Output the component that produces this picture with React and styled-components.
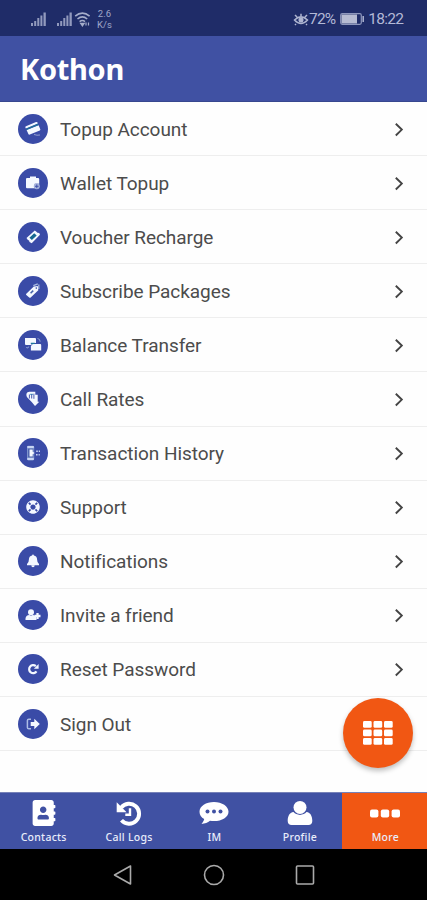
import { createGlobalStyle, styled } from 'styled-components'
import { FaAddressBook, FaLifeRing } from 'react-icons/fa'

const colors = {
  status: '#1f2c68',
  primary: '#4051a3',
  badge: '#3a4ba7',
  accent: '#f15713',
  text: '#4c4c4c',
  line: '#eeeeee',
  statusText: '#b3b9d6'
}

const GlobalStyle = createGlobalStyle`
  * {
    box-sizing: border-box;
  }

  body {
    margin: 0;
    background: #fff;
  }

  svg {
    display: block;
    flex: none;
  }
`

const Screen = styled.div`
  position: relative;
  display: flex;
  flex-direction: column;
  width: 427px;
  height: 900px;
  overflow: hidden;
  background: #fefefe;
  font-family: Roboto, sans-serif;
`

const StatusBar = styled.div`
  display: flex;
  justify-content: space-between;
  align-items: center;
  height: 36px;
  padding: 2px 23px 0 30px;
  background: ${colors.status};
  color: ${colors.statusText};
`

const StatusGroup = styled.div`
  display: flex;
  align-items: center;
`

const Signals = styled.div`
  display: flex;
  gap: 9px;
  margin-right: 1px;
`

const Speed = styled.div`
  margin-left: 6px;
  color: #9fa7c8;
  font-size: 9.5px;
  line-height: 11px;
  text-align: center;
`

const StatusText = styled.span`
  width: ${props => props.$width}px;
  font-size: 15.5px;
  line-height: 18px;
  white-space: nowrap;
  letter-spacing: ${props => props.$spacing || 0}px;
`

const Header = styled.header`
  display: flex;
  align-items: center;
  height: 66px;
  padding: 1px 20px 0;
  border-bottom: 1px solid #37488f;
  background: ${colors.primary};
`

const Title = styled.h1`
  margin: 0;
  color: #fff;
  font: 700 29px/40px 'Noto Sans', sans-serif;
  letter-spacing: -0.3px;
`

const Menu = styled.ul`
  flex: 1;
  margin: 0;
  padding: 0;
  list-style: none;
`

const Row = styled.li`
  display: flex;
  align-items: center;
  height: 54.1px;
  padding: 0 22px 0 18px;
  border-bottom: 1px solid ${colors.line};
`

const Badge = styled.span`
  display: flex;
  align-items: center;
  justify-content: center;
  width: 30px;
  height: 30px;
  border-radius: 50%;
  background: ${colors.badge};
  color: #f4f8ff;
`

const Label = styled.span`
  flex: 1;
  margin-left: 12px;
  padding-top: 2px;
  color: ${colors.text};
  font-size: 19px;
  line-height: 26px;
  letter-spacing: -0.05px;
`

const Fab = styled.button`
  position: absolute;
  top: 698px;
  right: 14px;
  display: flex;
  align-items: center;
  justify-content: center;
  width: 70px;
  height: 70px;
  padding: 0;
  border: 0;
  border-radius: 50%;
  background: ${colors.accent};
  box-shadow: 0 3px 5px rgba(0, 0, 0, 0.25);
`

const Tabs = styled.nav`
  display: grid;
  grid-template-columns: repeat(5, 1fr);
  height: 57px;
  border-top: 1px solid #7681b8;
  background: ${colors.primary};
`

const Tab = styled.div`
  display: flex;
  flex-direction: column;
  align-items: center;
  padding-top: 6px;
  padding-left: 2px;
  background: ${props => (props.$active ? colors.accent : 'transparent')};
  color: #fff;
`

const TabIcon = styled.span`
  display: flex;
  align-items: center;
  justify-content: center;
  height: 28px;
`

const TabLabel = styled.span`
  margin-top: 3px;
  color: #e9edfb;
  font: 500 10.5px/14px 'Noto Sans', sans-serif;
  letter-spacing: 0.25px;
`

const SystemBar = styled.div`
  display: flex;
  align-items: center;
  justify-content: center;
  gap: 69px;
  height: 51px;
  background: #000;
`

const Glyph = ({ children }) => (
  <svg width='30' height='30' viewBox='0 0 30 30' fill='currentColor'>{children}</svg>
)

const CardIcon = () => (
  <Glyph>
    <path d='M8 12.2 18 8.1q1-.4 1.4.5l.4 1L7.9 14.5l-.5-1.1q-.3-.8.6-1.2Z' />
    <path d='m8.6 16.1 12-4.9 1.7 4q.3.9-.5 1.3l-10 4.1q-1 .4-1.4-.5Z' />
    <path d='m8 14.7 12-4.9.5 1.2-12 4.9Z' fill='#1d719b' />
    <path d='M16 20.5q3 1.2 6 .5' fill='none' stroke='currentColor' strokeWidth='.8' opacity='.6' />
  </Glyph>
)

const WalletIcon = () => (
  <Glyph>
    <path d='M9 10h3V8.5h6V10h2q1.2 0 1.2 1.2v4.5h-4.5v4.5H9q-1 0-1-1v-8q0-1.2 1-1.2Z' />
    <circle cx='18.8' cy='18.3' r='3' fill='#a4b2dd' />
    <path d='M18.8 16.4v3.8M17 18.3h3.6' stroke={colors.badge} strokeWidth='.9' />
  </Glyph>
)

const VoucherIcon = () => (
  <Glyph>
    <path d='m8.5 16 8.3-7.6 1.6 1.4q.7 1.1 2.8 1.3l.8 1.7-8.3 8.4-2.2-1.2q0-1.9-1.6-2Z' />
    <path d='m11.4 15.8 4.8-4.6 2.5 2.2-4.8 4.7Z' fill='#166791' />
  </Glyph>
)

const TagIcon = () => (
  <Glyph>
    <path d='m8.3 17.8 7.5-7.3 4-.5.5 4.2-7.6 7.2q-.8.7-1.5 0l-2.9-2.5q-.7-.5 0-1.1Z' />
    <path d='m15.3 9.7 4.5-1.9m1 5.2v-4.6' fill='none' stroke='#a7b8df' strokeWidth='1.3' />
    <path d='m12.6 17.2 2.6-2.6' stroke='#4864ac' strokeWidth='1.6' />
    <circle cx='18.3' cy='12.1' r='.8' fill={colors.badge} />
  </Glyph>
)

const TransferIcon = () => (
  <Glyph>
    <path d='M7 8h10q1 0 1 1v4h-3l-2 2H8q-1 0-1-1Z' />
    <path d='M14.7 14h7.5q1 0 1 1v5.5H12.9v-4.6Z' />
    <path d='M12.8 13.4h4' stroke='#19759b' strokeWidth='1.3' />
    <path d='M19.5 8.5q2.6.2 2.7 3.2M10.7 16.5q-.2 2.5-2.5 1' stroke='#8d9fd3' fill='none' />
  </Glyph>
)

const RatesIcon = () => (
  <Glyph>
    <path d='M11.3 7.8h6v3h2.4v7h1.6L17 22l-3.1-3.8-5-5.1q-1.9-4.6 2.4-5.3Z' />
    <path d='M11.4 10.5v4M13.7 10v4.5m2.2-4.8v5.1' stroke={colors.badge} strokeWidth='.9' />
    <path d='M12 10.3h3' stroke='#2d7fae' strokeWidth='.8' />
  </Glyph>
)

const HistoryIcon = () => (
  <Glyph>
    <rect x='9' y='7.8' width='7.2' height='14.6' rx='1.4' fill='#7f95cc' />
    <path d='M9.3 9h6.5M9.3 21h6.5' stroke='#e1eaff' strokeWidth='1.5' />
    <path d='M10.2 10.8h5v8.4h-5z' fill='#445ba9' />
    <path d='M11.5 11.5h3.2v2.2l2 1.3-2 1.3v2.2h-3.2Z' />
    <path d='M18.2 13.2h1.6m1 0h1.2M18 16.8h1.6m1 0h1.2' stroke='#c4d1f3' strokeWidth='1.4' />
  </Glyph>
)

const BellIcon = () => (
  <Glyph>
    <path d='M15 8.6q.9 0 .9 1 3.1.7 3.2 4 0 3.4 1.9 4.4v1.3H9V18q1.9-1 1.9-4.4.1-3.3 3.2-4 0-1 .9-1Z' />
    <path d='M13.3 19.3h3.4q0 1.9-1.7 1.9t-1.7-1.9Z' />
  </Glyph>
)

const InviteIcon = () => (
  <Glyph>
    <circle cx='13' cy='12.2' r='3' />
    <path d='M7.5 20v-1.4q.2-3.3 4-3.6 1.5 1 3.1 0 3.7.3 3.9 3.7V20Z' />
    <path d='M19.5 13v6m-3-3h6' stroke='currentColor' strokeWidth='2.3' />
  </Glyph>
)

const ResetIcon = () => (
  <Glyph>
    <path d='M18.5 17.4a4 4 0 1 1-.7-5.2' fill='none' stroke='currentColor' strokeWidth='2.2' />
    <path d='M20.6 10v4.7h-4.7Z' />
  </Glyph>
)

const SignOutIcon = () => (
  <Glyph>
    <path d='M13 10.2h-2.2q-1.4 0-1.4 1.4v6.8q0 1.4 1.4 1.4H13' fill='none' stroke='#aebde6' strokeWidth='1.5' />
    <path d='M12.7 12.9h3.6V9.7l5.5 5.3-5.5 5.3v-3.2h-3.6Z' />
  </Glyph>
)

const Chevron = () => (
  <svg width='12' height='16' viewBox='0 0 12 16'>
    <path d='m2.8 2.7 6 5.9-6 5.9' fill='none' stroke='#444' strokeWidth='1.9' />
  </svg>
)

const Signal = () => (
  <svg width='17' height='16' viewBox='0 0 17 16' fill='#929abd'>
    <path d='M1 12h2v3H1zM4.2 10h2v5h-2zM7.3 7h2v8h-2zM10.4 4.5h2V15h-2zM13.5 1.5h2.3V15h-2.3z' />
  </svg>
)

const Wifi = () => (
  <svg width='17' height='16' viewBox='0 0 17 16' fill='none' stroke='#a5adca' strokeWidth='1.6'>
    <path d='M1.2 5.2q7.2-6.2 14.4 0M3.5 8q4.9-4.1 9.7 0M5.6 10.6q2.8-2.2 5.4 0' />
    <path d='m7 12.5 1.4 2 1.4-2Z' fill='#a5adca' />
    <path d='M12 11.5v3m2.5-3v3' strokeWidth='1.2' />
  </svg>
)

const Eye = () => (
  <svg width='16' height='14' viewBox='0 0 16 14' fill='none' stroke='#aeb5d1' strokeWidth='1.5'>
    <path d='M1.5 8Q8 1.7 14.5 8 8 15 1.5 8ZM2 3l2 2m4-3.2V4m6-1-2 2M3 12l-1 1m11-1 1 1' />
    <circle cx='8' cy='8' r='1.8' fill='#aeb5d1' />
  </svg>
)

const Battery = () => (
  <svg width='25' height='12' viewBox='0 0 25 12'>
    <rect x='.7' y='.7' width='20.6' height='10.6' rx='1.5' fill='none' stroke='#8e97bd' strokeWidth='1.2' />
    <rect x='1.5' y='1.5' width='15.5' height='9' fill='#b6bbd2' />
    <path d='M23.2 3v6' stroke='#aeb5d1' strokeWidth='1.5' />
  </svg>
)

const Recent = () => (
  <svg width='26' height='25' viewBox='0 0 26 25' fill='none' stroke='#fff'>
    <path d='M5.2 6.6a10 10 0 1 1 .3 12.6' strokeWidth='3.9' />
    <path d='M.7 1.3v9.9h9.9Z' fill='#fff' stroke='none' />
    <path d='M14 7.2v6.6H9.3' strokeWidth='2.4' />
  </svg>
)

const Bubble = () => (
  <svg width='30' height='26' viewBox='0 0 30 26'>
    <path d='M15 2C7 2 .5 6.1.5 11.7c0 3 1.8 5.7 4.7 7.4-.3 1.9-1.4 3.4-2.7 4.8 3.4-.2 6.3-1.4 8.5-3.2 1.3.3 2.6.4 4 .4 8 0 14.5-4 14.5-9.4S23 2 15 2Z' fill='#fff' />
    {[8.5, 15, 21.5].map(x => <circle key={x} cx={x} cy='11.5' r='2' fill={colors.primary} />)}
  </svg>
)

const Person = () => (
  <svg width='26' height='26' viewBox='0 0 26 26' fill='#fff'>
    <path d='M6.5 12.1c1.5 1.8 3.8 2.8 6.5 2.8s5-1 6.5-2.8c4 .5 5.8 4.2 5.8 8.8 0 2.4-1.6 4.1-3.8 4.1h-17C2.3 25 .7 23.3.7 20.9c0-4.6 1.8-8.3 5.8-8.8Z' />
    <circle cx='13' cy='7.4' r='6.5' />
  </svg>
)

const Dots = () => (
  <svg width='30' height='9' viewBox='0 0 30 9' fill='#fff'>
    {[0, 10.8, 21.6].map(x => <rect key={x} x={x} y='.5' width='8.4' height='8' rx='2' />)}
  </svg>
)

const Keypad = () => (
  <svg width='30' height='24' viewBox='0 0 30 24' fill='#fff'>
    {[0, 8.5, 17].map(y => [0, 10.5, 21].map(x => (
      <rect key={`${x}-${y}`} x={x} y={y} width='8.7' height='6.8' rx='1.4' />
    )))}
  </svg>
)

const items = [
  { label: 'Topup Account', icon: <CardIcon /> },
  { label: 'Wallet Topup', icon: <WalletIcon /> },
  { label: 'Voucher Recharge', icon: <VoucherIcon /> },
  { label: 'Subscribe Packages', icon: <TagIcon /> },
  { label: 'Balance Transfer', icon: <TransferIcon /> },
  { label: 'Call Rates', icon: <RatesIcon /> },
  { label: 'Transaction History', icon: <HistoryIcon /> },
  { label: 'Support', icon: <FaLifeRing size={14} /> },
  { label: 'Notifications', icon: <BellIcon /> },
  { label: 'Invite a friend', icon: <InviteIcon /> },
  { label: 'Reset Password', icon: <ResetIcon /> },
  { label: 'Sign Out', icon: <SignOutIcon />, last: true }
]

const tabs = [
  { label: 'Contacts', icon: <FaAddressBook size={26} /> },
  { label: 'Call Logs', icon: <Recent /> },
  { label: 'IM', icon: <Bubble /> },
  { label: 'Profile', icon: <Person /> },
  { label: 'More', icon: <Dots />, active: true }
]

const App = () => (
  <Screen>
    <GlobalStyle />
    <StatusBar>
      <StatusGroup>
        <Signals>
          <Signal />
          <Signal />
        </Signals>
        <Wifi />
        <Speed>2.6<br />K/s</Speed>
      </StatusGroup>
      <StatusGroup>
        <Eye />
        <StatusText $width={31} $spacing={-0.8}>72%</StatusText>
        <Battery />
        <StatusText $width={39} $spacing={-0.7}>&nbsp;18:22</StatusText>
      </StatusGroup>
    </StatusBar>
    <Header>
      <Title>Kothon</Title>
    </Header>
    <Menu>
      {items.map(item => (
        <Row key={item.label}>
          <Badge>{item.icon}</Badge>
          <Label>{item.label}</Label>
          {!item.last && <Chevron />}
        </Row>
      ))}
    </Menu>
    <Fab aria-label='Keypad'><Keypad /></Fab>
    <Tabs>
      {tabs.map(tab => (
        <Tab key={tab.label} $active={tab.active}>
          <TabIcon>{tab.icon}</TabIcon>
          <TabLabel>{tab.label}</TabLabel>
        </Tab>
      ))}
    </Tabs>
    <SystemBar>
      <svg width='22' height='22' viewBox='0 0 22 22'>
        <path d='M18.5 2v18L2.5 11Z' fill='none' stroke='#aaa' strokeWidth='1.6' strokeLinejoin='round' />
      </svg>
      <svg width='22' height='22' viewBox='0 0 22 22'>
        <circle cx='11' cy='11' r='9.5' fill='none' stroke='#aaa' strokeWidth='1.6' />
      </svg>
      <svg width='22' height='22' viewBox='0 0 22 22'>
        <rect x='2.5' y='2' width='17' height='18' rx='1' fill='none' stroke='#aaa' strokeWidth='1.6' />
      </svg>
    </SystemBar>
  </Screen>
)

export default App
